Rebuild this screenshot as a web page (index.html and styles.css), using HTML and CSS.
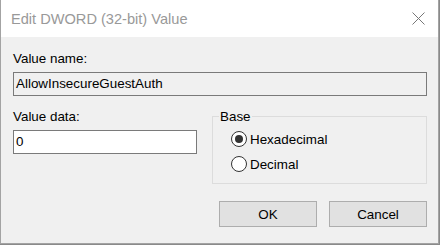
FILE: index.html
```html
<!DOCTYPE html>
<html>
<head>
<meta charset="utf-8">
<link rel="stylesheet" href="styles.css">
</head>
<body>
<div class="window">
  <div class="titlebar">
    <span class="title">Edit DWORD (32-bit) Value</span>
    <svg class="close" width="13" height="13" viewBox="0 0 13 13"><path d="M0.5 0.5 L12.5 12.5 M12.5 0.5 L0.5 12.5" stroke="#777" stroke-width="1" fill="none"/></svg>
  </div>
  <div class="content">
    <div class="label first">Value name:</div>
    <div class="textbox readonly wide">AllowInsecureGuestAuth</div>
    <div class="row">
      <div class="col">
        <div class="label">Value data:</div>
        <div class="textbox narrow">0</div>
      </div>
      <fieldset class="group">
        <legend>Base</legend>
        <div class="radios">
          <div class="radio"><span class="dot checked"></span><span>Hexadecimal</span></div>
          <div class="radio"><span class="dot"></span><span>Decimal</span></div>
        </div>
      </fieldset>
    </div>
    <div class="buttons">
      <div class="btn">OK</div>
      <div class="btn">Cancel</div>
    </div>
  </div>
</div>
</body>
</html>
```
FILE: styles.css
```css
html, body {
  margin: 0;
  padding: 0;
}
body {
  width: 440px;
  height: 245px;
  background: #8a8a8a;
  font-family: "Liberation Sans", Arial, sans-serif;
  font-size: 13.4px;
  line-height: 15px;
  color: #000;
  overflow: hidden;
}
.window {
  width: 439px;
  height: 244px;
  box-sizing: border-box;
  border: 1px solid #a3a3a3;
  border-top: none;
  background: #f0f0f0;
  display: flex;
  flex-direction: column;
}
.titlebar {
  height: 37px;
  background: #fff;
  display: flex;
  align-items: center;
  justify-content: space-between;
  padding: 0 13px 0 10px;
  flex: none;
}
.title {
  font-size: 14.6px;
  color: #999;
  margin-top: 1px;
}
.close {
  display: block;
}
.content {
  padding: 0 11px 0 12px;
  display: flex;
  flex-direction: column;
}
.label.first {
  margin-top: 14px;
}
.textbox {
  box-sizing: border-box;
  height: 24px;
  border: 1px solid #7a7a7a;
  background: #fff;
  padding: 0 0 0 2px;
  line-height: 22px;
}
.textbox.readonly {
  background: #f0f0f0;
  margin-top: 6px;
}
.textbox.wide {
  width: 414px;
}
.textbox.narrow {
  width: 184px;
  margin-top: 6px;
}
.row {
  display: flex;
  margin-top: 13px;
  gap: 15px;
}
.col {
  display: flex;
  flex-direction: column;
}
.group {
  margin: 0;
  padding: 0;
  border: 1px solid #dcdcdc;
  width: 215px;
  height: 75px;
  box-sizing: border-box;
  min-inline-size: 0;
}
.group legend {
  padding: 0 1px;
  margin-left: 6px;
}
.radios {
  padding-left: 18px;
  padding-top: 7px;
  display: flex;
  flex-direction: column;
  gap: 9px;
}
.radio {
  display: flex;
  align-items: center;
  height: 16px;
}
.dot {
  box-sizing: border-box;
  width: 16px;
  height: 16px;
  border-radius: 50%;
  border: 1px solid #333;
  background: #fff;
  margin-right: 3px;
  display: flex;
  align-items: center;
  justify-content: center;
}
.dot.checked::after {
  content: "";
  width: 8px;
  height: 8px;
  border-radius: 50%;
  background: #333;
}
.buttons {
  display: flex;
  justify-content: flex-end;
  gap: 12px;
  margin-top: 17px;
}
.btn {
  box-sizing: border-box;
  width: 98px;
  height: 26px;
  border: 1px solid #adadad;
  background: #e1e1e1;
  display: flex;
  align-items: center;
  justify-content: center;
}
```
